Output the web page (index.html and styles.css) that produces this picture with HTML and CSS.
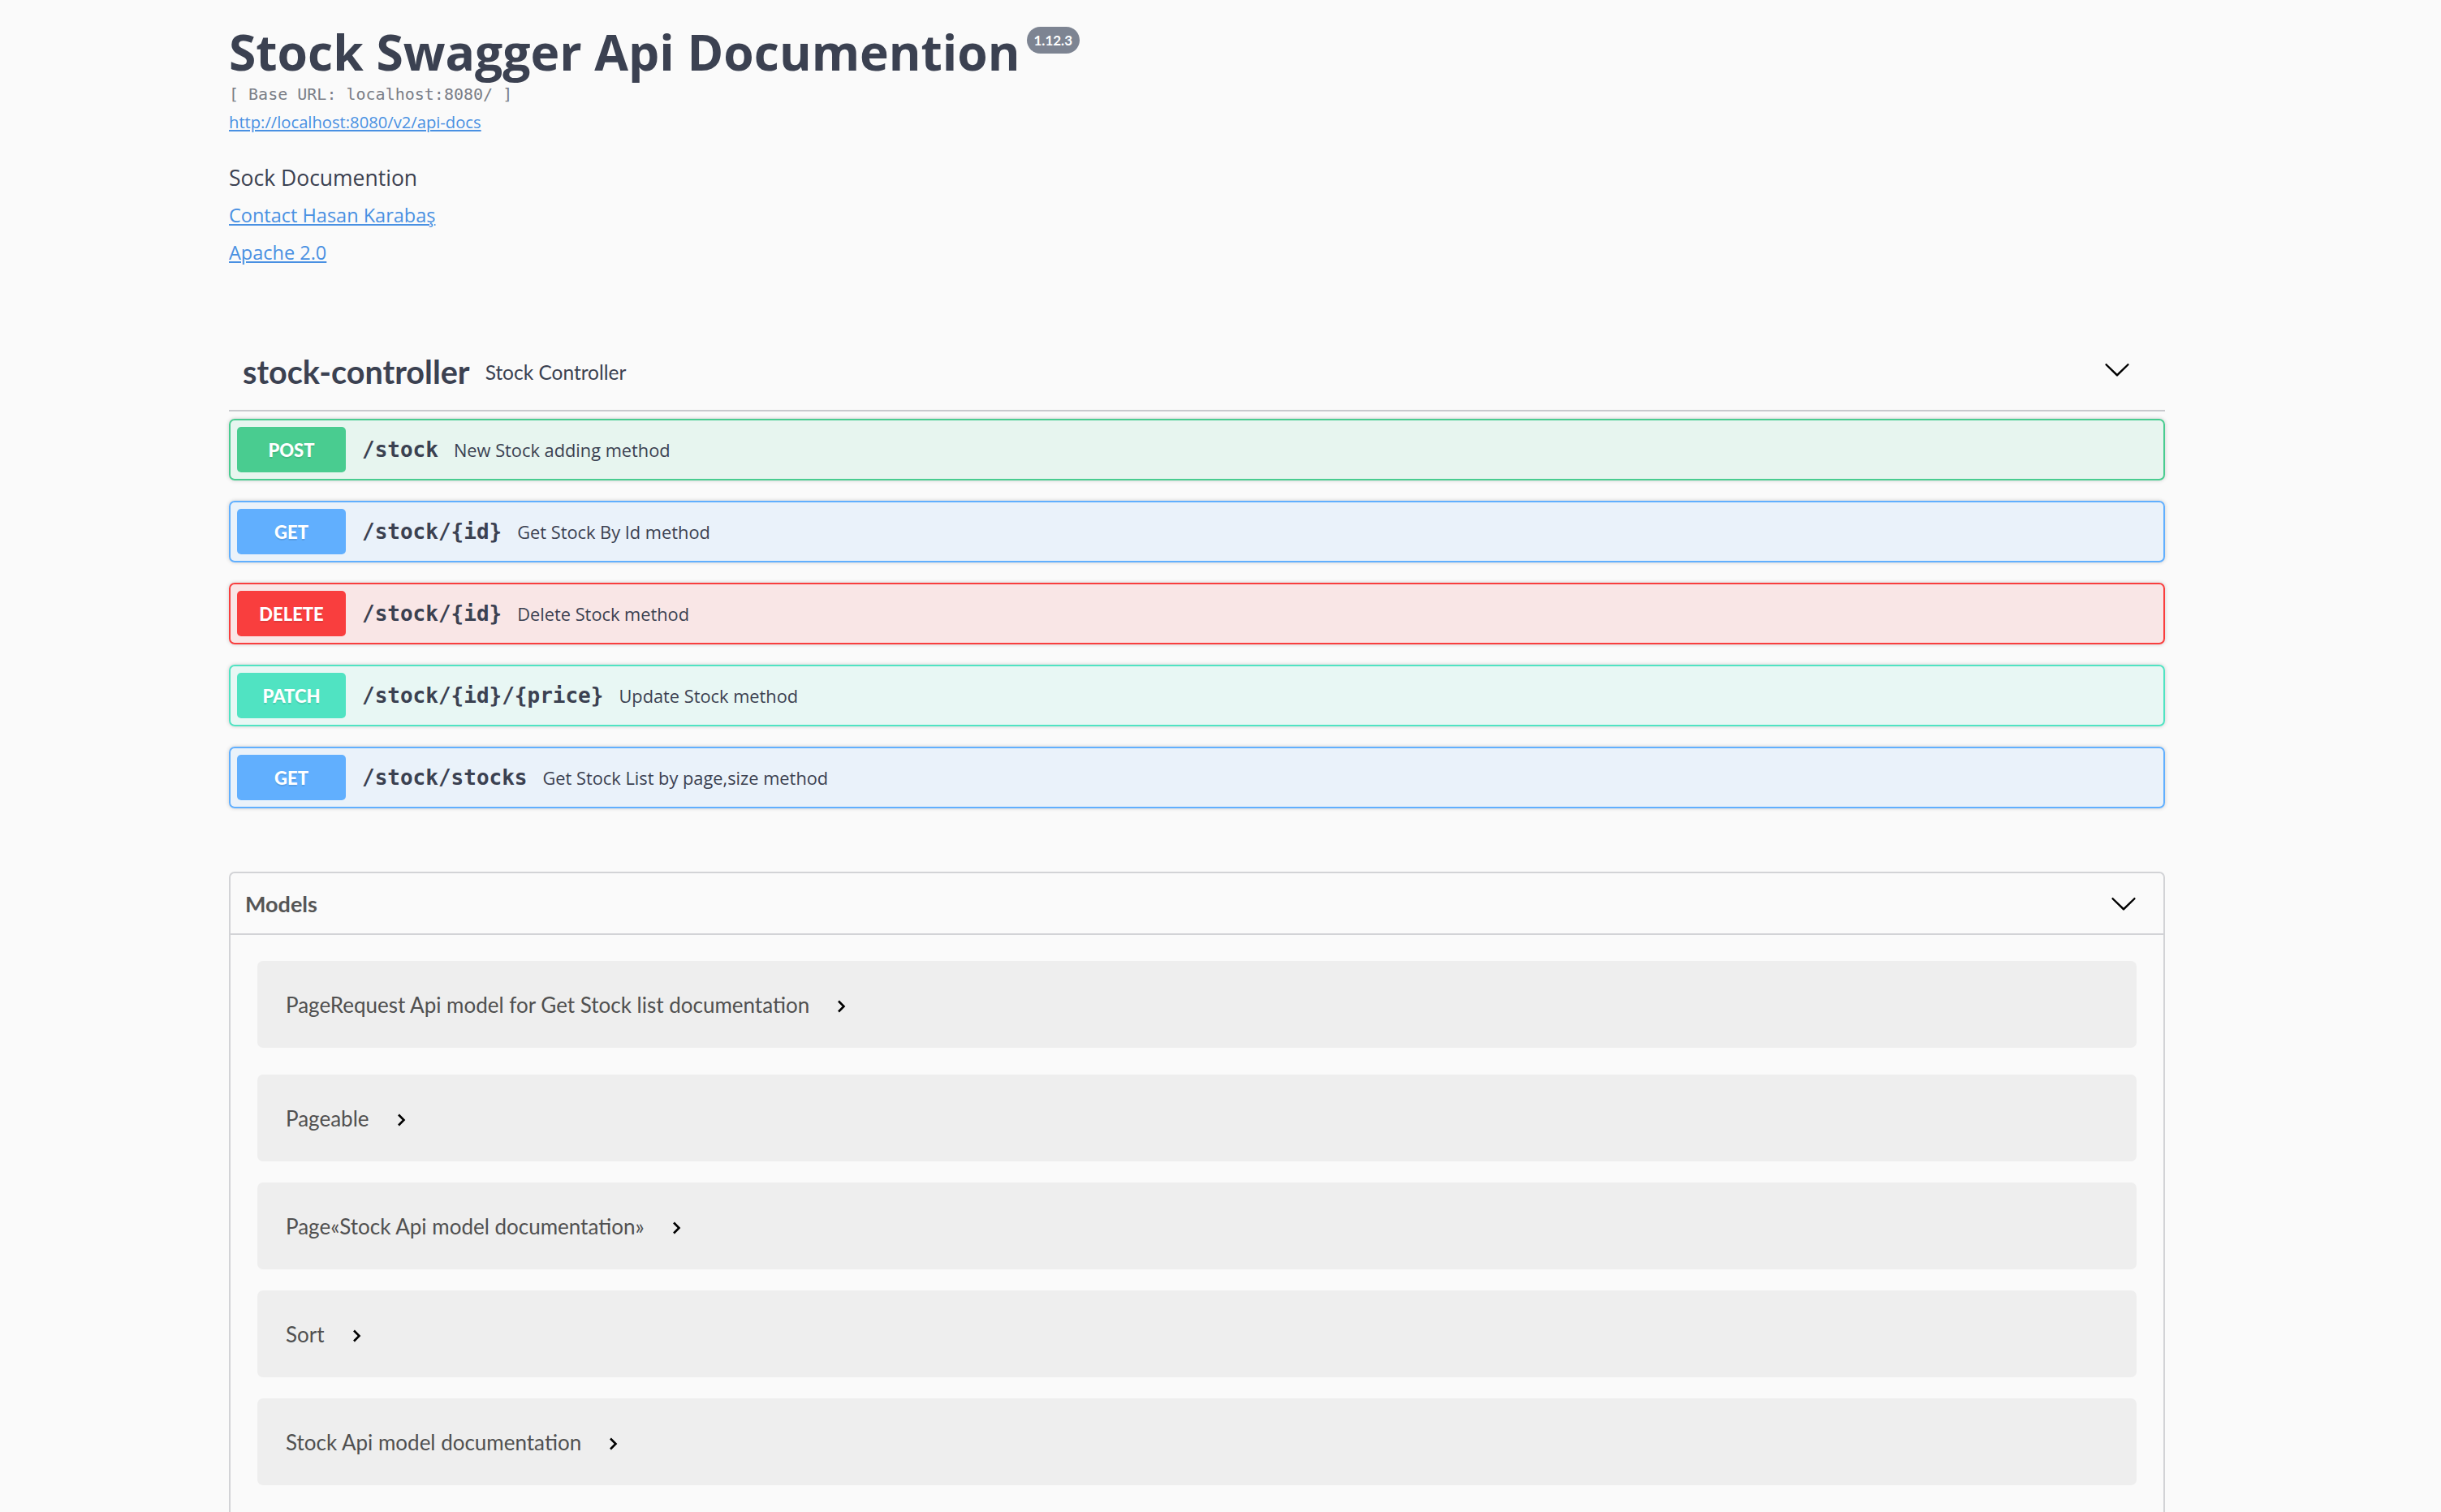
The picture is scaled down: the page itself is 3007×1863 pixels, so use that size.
FILE: index.html
```html
<!DOCTYPE html>
<html lang="en">
<head>
<meta charset="utf-8">
<title>Stock Swagger Api Documention</title>
<link rel="stylesheet" href="styles.css">
</head>
<body>
<div class="page">
  <header class="info">
    <div class="title-row">
      <h1 class="title">Stock Swagger Api Documention</h1>
      <span class="version">1.12.3</span>
    </div>
    <div class="base-url">[ Base URL: localhost:8080/ ]</div>
    <div class="spec-line"><a class="spec-link" href="#">http://localhost:8080/v2/api-docs</a></div>
    <p class="desc">Sock Documention</p>
    <div class="info-line contact"><a class="info-link" href="#">Contact Hasan Karabaş</a></div>
    <div class="info-line license"><a class="info-link" href="#">Apache 2.0</a></div>
  </header>

  <section class="tag">
    <div class="tag-head">
      <span class="tag-name">stock-controller</span>
      <span class="tag-desc">Stock Controller</span>
      <svg class="arrow" width="34" height="34" viewBox="0 0 20 20"><path d="M17.418 6.109c.272-.268.709-.268.979 0s.271.701 0 .969l-7.908 7.83c-.27.268-.707.268-.979 0l-7.908-7.830c-.27-.268-.27-.701 0-.969.271-.268.709-.268.979 0L10 13.25l7.418-7.141z"/></svg>
    </div>
    <div class="ops">
      <div class="op post"><span class="method">POST</span><span class="path">/stock</span><span class="op-desc">New Stock adding method</span></div>
      <div class="op get"><span class="method">GET</span><span class="path">/stock/{id}</span><span class="op-desc">Get Stock By Id method</span></div>
      <div class="op delete"><span class="method">DELETE</span><span class="path">/stock/{id}</span><span class="op-desc">Delete Stock method</span></div>
      <div class="op patch"><span class="method">PATCH</span><span class="path">/stock/{id}/{price}</span><span class="op-desc">Update Stock method</span></div>
      <div class="op get"><span class="method">GET</span><span class="path">/stock/stocks</span><span class="op-desc">Get Stock List by page,size method</span></div>
    </div>
  </section>

  <section class="models">
    <div class="models-head">
      <span class="models-title">Models</span>
      <svg class="arrow" width="34" height="34" viewBox="0 0 20 20"><path d="M17.418 6.109c.272-.268.709-.268.979 0s.271.701 0 .969l-7.908 7.83c-.27.268-.707.268-.979 0l-7.908-7.83c-.27-.268-.27-.701 0-.969.271-.268.709-.268.979 0L10 13.25l7.418-7.141z"/></svg>
    </div>
    <div class="models-body">
      <div class="model first"><span class="model-title">PageRequest Api model for Get Stock list documentation</span><svg class="toggle" width="11" height="16" viewBox="0 0 11 16"><path d="M2 1.5 L8.5 8 L2 14.5" fill="none" stroke="#000" stroke-width="2.6"/></svg></div>
      <div class="model"><span class="model-title">Pageable</span><svg class="toggle" width="11" height="16" viewBox="0 0 11 16"><path d="M2 1.5 L8.5 8 L2 14.5" fill="none" stroke="#000" stroke-width="2.6"/></svg></div>
      <div class="model"><span class="model-title">Page«Stock Api model documentation»</span><svg class="toggle" width="11" height="16" viewBox="0 0 11 16"><path d="M2 1.5 L8.5 8 L2 14.5" fill="none" stroke="#000" stroke-width="2.6"/></svg></div>
      <div class="model"><span class="model-title">Sort</span><svg class="toggle" width="11" height="16" viewBox="0 0 11 16"><path d="M2 1.5 L8.5 8 L2 14.5" fill="none" stroke="#000" stroke-width="2.6"/></svg></div>
      <div class="model"><span class="model-title">Stock Api model documentation</span><svg class="toggle" width="11" height="16" viewBox="0 0 11 16"><path d="M2 1.5 L8.5 8 L2 14.5" fill="none" stroke="#000" stroke-width="2.6"/></svg></div>
    </div>
  </section>
</div>
</body>
</html>
```

FILE: styles.css
```css
html, body {
  margin: 0;
  padding: 0;
  background: #fafafa;
}

body {
  font-family: "Open Sans", "Noto Sans", sans-serif;
  color: #3b4151;
}

.page {
  width: 2385px;
  padding: 29px 0 0 282px;
}

/* ---------- info ---------- */
.title-row {
  display: flex;
  align-items: flex-start;
  height: 70px;
}

.title {
  margin: 0;
  font-family: "Open Sans", sans-serif;
  font-weight: 700;
  font-size: 60.5px;
  line-height: 70px;
  color: #3b4151;
}

.version {
  margin: 4px 0 0 8px;
  height: 33px;
  line-height: 33px;
  padding: 0 9px;
  border-radius: 17px;
  background: #7d8492;
  color: #fff;
  font-family: Lato, sans-serif;
  font-weight: 700;
  font-size: 17px;
}

.base-url {
  margin-top: 5px;
  font-family: "DejaVu Sans Mono", monospace;
  font-size: 20px;
  line-height: 24px;
  color: #7a7e87;
}

.spec-line {
  margin-top: 10px;
  line-height: 24px;
}

.spec-link {
  font-family: "Open Sans", sans-serif;
  font-size: 20.2px;
  color: #4990e2;
  text-decoration: underline;
}

.desc {
  margin: 39px 0 0;
  font-size: 26.5px;
  line-height: 32px;
  color: #3b4151;
}

.info-line {
  line-height: 28px;
}

.info-line.contact {
  margin-top: 16px;
}

.info-line.license {
  margin-top: 15px;
}

.info-link {
  font-size: 23.5px;
  color: #4990e2;
  text-decoration: underline;
}

/* ---------- tag ---------- */
.tag {
  margin-top: 89px;
}

.tag-head {
  display: flex;
  align-items: center;
  padding: 17px 42px 23px 17px;
  border-bottom: 2px solid #c8c9cd;
}

.tag-name {
  font-family: Lato, sans-serif;
  font-weight: 700;
  font-size: 39.6px;
  line-height: 48px;
  color: #3b4151;
}

.tag-desc {
  flex: 1;
  padding-left: 19px;
  font-family: Lato, sans-serif;
  font-size: 24.5px;
  color: #3b4151;
}

.arrow {
  display: block;
  fill: #000;
}

.tag-head .arrow {
  margin-top: -6px;
}

.ops {
  margin-top: 9px;
  display: flex;
  flex-direction: column;
  gap: 25px;
}

.op {
  display: flex;
  align-items: center;
  padding: 8px;
  border: 2px solid;
  border-radius: 7px;
  box-shadow: 0 0 5px rgba(0, 0, 0, .19);
}

.method {
  width: 134px;
  height: 56px;
  display: flex;
  align-items: center;
  justify-content: center;
  border-radius: 5px;
  color: #fff;
  font-family: Lato, sans-serif;
  font-weight: 900;
  font-size: 22px;
  text-shadow: 0 2px 0 rgba(0, 0, 0, .1);
}

.path {
  padding: 0 19px 0 20px;
  font-family: "DejaVu Sans Mono", monospace;
  font-weight: 700;
  font-size: 26px;
  color: #3b4151;
}

.op-desc {
  font-family: "Open Sans", sans-serif;
  font-size: 21.8px;
  color: #3b4151;
}

.op.post { border-color: #49cc90; background: rgba(73, 204, 144, .1); }
.op.post .method { background: #49cc90; }
.op.get { border-color: #61affe; background: rgba(97, 175, 254, .1); }
.op.get .method { background: #61affe; }
.op.delete { border-color: #f93e3e; background: rgba(249, 62, 62, .1); }
.op.delete .method { background: #f93e3e; }
.op.patch { border-color: #50e3c2; background: rgba(80, 227, 194, .1); }
.op.patch .method { background: #50e3c2; }

/* ---------- models ---------- */
.models {
  margin-top: 78px;
  border: 2px solid #d2d3d6;
  border-radius: 7px;
}

.models-head {
  height: 74px;
  display: flex;
  align-items: center;
  justify-content: space-between;
  padding: 0 32px 0 18px;
  border-bottom: 2px solid #d2d3d6;
}

.models-title {
  font-family: Lato, sans-serif;
  font-weight: 700;
  font-size: 27px;
  color: #555;
}

.models-body {
  padding: 32px 33px 40px;
}

.model {
  height: 107px;
  display: flex;
  align-items: center;
  padding-left: 35px;
  margin-bottom: 26px;
  border-radius: 7px;
  background: #eeeeee;
}

.model.first {
  margin-bottom: 33px;
}

.model-title {
  font-family: Lato, sans-serif;
  font-size: 26px;
  color: #505050;
}

.toggle {
  display: block;
  margin: 4px 0 0 34px;
}
```
